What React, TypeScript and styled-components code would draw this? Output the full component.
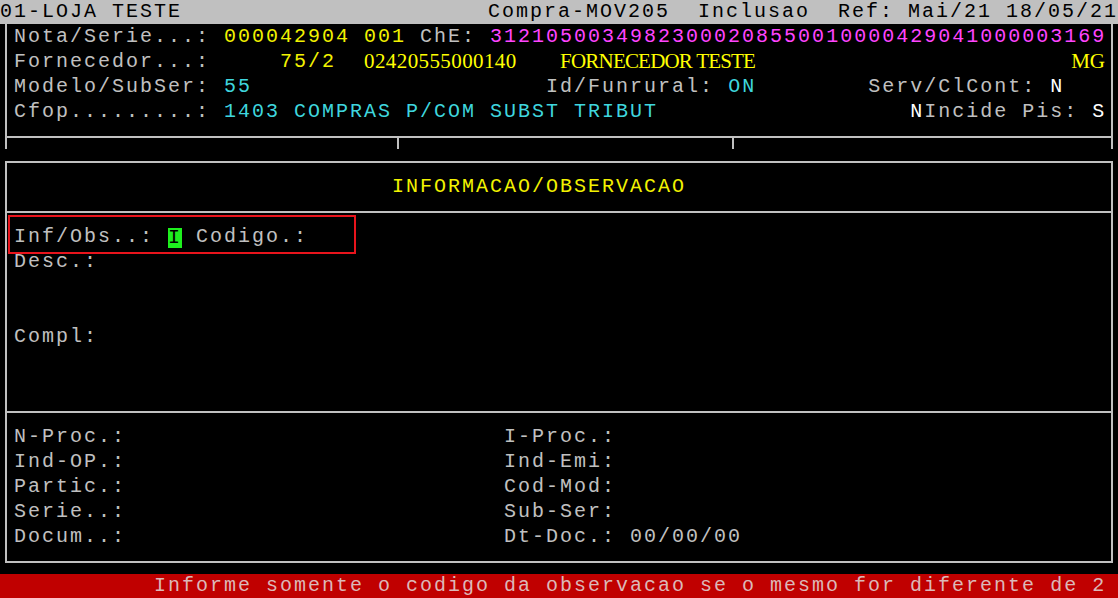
import { type FC, type ReactNode } from 'react'
import styled, { createGlobalStyle } from 'styled-components'

const GlobalStyle = createGlobalStyle`
  html, body {
    margin: 0;
    padding: 0;
    background: #000;
  }
`

type Tone = 'gray' | 'yellow' | 'cyan' | 'magenta' | 'white'

const tones: Record<Tone, string> = {
  gray: '#c0c0c0',
  yellow: '#f2f200',
  cyan: '#3fd6de',
  magenta: '#ff45ff',
  white: '#ffffff'
}

const LINE = '#c0c0c0'

const Screen = styled.div`
  width: 1118px;
  height: 598px;
  overflow: hidden;
  background: #000;
  display: flex;
  flex-direction: column;
  font-family: 'Liberation Mono', 'Courier New', monospace;
  font-size: 20px;
  letter-spacing: 2px;
  color: ${tones.gray};
`

const TitleBar = styled.div`
  flex: none;
  height: 24px;
  line-height: 24px;
  background: #c0c0c0;
  color: #000;
  display: flex;
  justify-content: space-between;
  white-space: pre;
`

const HeaderFrame = styled.div`
  flex: none;
  margin-left: 5px;
  width: 1108px;
  height: 125px;
  box-sizing: border-box;
  border-left: 2px solid ${LINE};
  border-right: 2px solid ${LINE};
  display: flex;
  flex-direction: column;
`

const HeaderBody = styled.div`
  padding: 0 5px 0 7px;
`

const Rule = styled.div`
  flex: 1;
  margin-top: 12px;
  border-top: 2px solid ${LINE};
  display: flex;
`

const Tick = styled.span<{ $offset: number }>`
  margin-left: ${p => p.$offset}px;
  width: 2px;
  background: ${LINE};
`

const MainFrame = styled.div`
  flex: none;
  margin: 12px 0 0 5px;
  width: 1108px;
  box-sizing: border-box;
  border: 2px solid ${LINE};
`

const Section = styled.div<{ $divider?: boolean }>`
  position: relative;
  padding: 11px 5px 12px 7px;
  border-bottom: ${p => (p.$divider ? `2px solid ${LINE}` : 'none')};
`

const Row = styled.div`
  height: 25px;
  display: flex;
  align-items: center;
  white-space: pre;
`

const FieldRow = styled.div`
  height: 25px;
  display: grid;
  grid-template-columns: 490px 1fr;
  align-items: center;
  white-space: pre;
`

const Text = styled.span<{ $tone?: Tone }>`
  line-height: 25px;
  color: ${p => tones[p.$tone ?? 'gray']};
`

const SerifText = styled.span<{ $width?: number; $spacing?: number; $grow?: boolean }>`
  font-family: 'Liberation Serif', 'Times New Roman', serif;
  font-size: 21px;
  line-height: 25px;
  color: #ffff00;
  letter-spacing: ${p => p.$spacing ?? 0}px;
  width: ${p => (p.$width ? `${p.$width}px` : 'auto')};
  flex: ${p => (p.$grow ? 1 : 'none')};
`

const Cursor = styled.span`
  display: inline-block;
  width: 14px;
  height: 20px;
  line-height: 20px;
  margin-top: 3px;
  background: #1ef01e;
  color: #000;
`

const Highlight = styled.div`
  position: absolute;
  left: 1px;
  top: 2px;
  width: 348px;
  height: 39px;
  box-sizing: border-box;
  border: 2px solid #e8141c;
  pointer-events: none;
`

const StatusBar = styled.div`
  flex: none;
  margin-top: 11px;
  height: 25px;
  line-height: 24px;
  padding-left: 154px;
  background: #c00000;
  color: #dcb8b8;
  white-space: pre;
`

const Field: FC<{ left: string, right: string, children?: ReactNode }> = ({ left, right, children }) => (
  <FieldRow>
    <Text>{left}</Text>
    <span>
      <Text>{right}</Text>
      {children}
    </span>
  </FieldRow>
)

const footerFields = [
  { left: 'N-Proc.:', right: 'I-Proc.:' },
  { left: 'Ind-OP.:', right: 'Ind-Emi:' },
  { left: 'Partic.:', right: 'Cod-Mod:' },
  { left: 'Serie..:', right: 'Sub-Ser:' }
]

const App: FC = () => {
  return (
    <>
      <GlobalStyle />
      <Screen>
        <TitleBar>
          <span>01-LOJA TESTE</span>
          <span>Compra-MOV205  Inclusao  Ref: Mai/21 18/05/21</span>
        </TitleBar>

        <HeaderFrame>
          <HeaderBody>
            <Row>
              <Text>Nota/Serie...: </Text>
              <Text $tone="yellow">000042904 001</Text>
              <Text> ChE: </Text>
              <Text $tone="magenta">31210500349823000208550010000429041000003169</Text>
            </Row>
            <Row>
              <Text>Fornecedor...:</Text>
              <Text $tone="yellow">     75/2  </Text>
              <SerifText $width={196} $spacing={0.4}>02420555000140</SerifText>
              <SerifText $grow $spacing={-0.8}>FORNECEDOR TESTE</SerifText>
              <SerifText style={{ marginRight: 1 }}>MG</SerifText>
            </Row>
            <Row>
              <Text>Modelo/SubSer: </Text>
              <Text $tone="cyan">55</Text>
              <Text>{'                     '}Id/Funrural: </Text>
              <Text $tone="cyan">ON</Text>
              <Text>{'        '}Serv/ClCont: </Text>
              <Text $tone="white">N</Text>
            </Row>
            <Row>
              <Text>Cfop.........: </Text>
              <Text $tone="cyan">1403 COMPRAS P/COM SUBST TRIBUT</Text>
              <Text>{'                  '}</Text>
              <Text $tone="white">N</Text>
              <Text>Incide Pis: </Text>
              <Text $tone="white">S</Text>
            </Row>
          </HeaderBody>
          <Rule>
            <Tick $offset={390} />
            <Tick $offset={333} />
          </Rule>
        </HeaderFrame>

        <MainFrame>
          <Section $divider>
            <Row>
              <Text $tone="yellow">{'                           '}INFORMACAO/OBSERVACAO</Text>
            </Row>
          </Section>

          <Section $divider>
            <Row>
              <Text>Inf/Obs..: </Text>
              <Cursor>I</Cursor>
              <Text> Codigo.:</Text>
            </Row>
            <Row><Text>Desc.:</Text></Row>
            <Row />
            <Row />
            <Row><Text>Compl:</Text></Row>
            <Row />
            <Row />
            <Highlight />
          </Section>

          <Section>
            {footerFields.map(field => (
              <Field key={field.left} left={field.left} right={field.right} />
            ))}
            <Field left="Docum..:" right="Dt-Doc.: ">
              <Text>00/00/00</Text>
            </Field>
          </Section>
        </MainFrame>

        <StatusBar>Informe somente o codigo da observacao se o mesmo for diferente de 2</StatusBar>
      </Screen>
    </>
  )
}

export default App
